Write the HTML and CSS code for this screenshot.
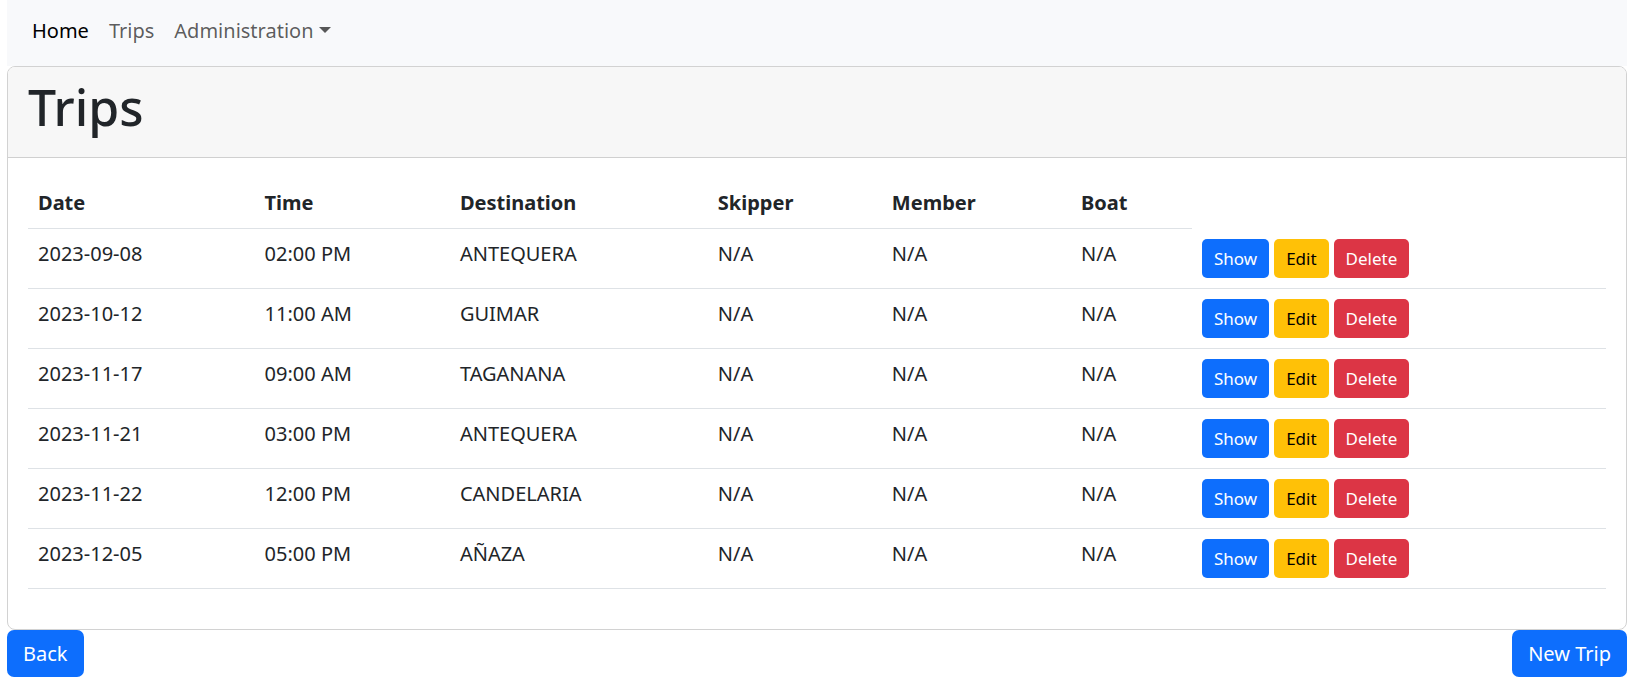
FILE: index.html
```html
<!DOCTYPE html>
<html lang="en">
<head>
<meta charset="utf-8">
<meta name="viewport" content="width=device-width, initial-scale=1">
<title>Trips</title>
<link rel="stylesheet" href="styles.css">
</head>
<body>
<nav class="navbar">
  <a class="nav-link active" href="#" aria-current="page">Home</a>
  <a class="nav-link" href="#">Trips</a>
  <button class="nav-link dropdown-toggle" type="button" aria-haspopup="true">Administration</button>
</nav>
<main>
  <section class="card">
    <header class="card-header"><h1>Trips</h1></header>
    <div class="card-body">
      <table class="table">
        <thead>
          <tr><th scope="col">Date</th><th scope="col">Time</th><th scope="col">Destination</th><th scope="col">Skipper</th><th scope="col">Member</th><th scope="col">Boat</th></tr>
        </thead>
        <tbody>
          <tr><td>2023-09-08</td><td>02:00 PM</td><td>ANTEQUERA</td><td>N/A</td><td>N/A</td><td>N/A</td><td><div class="actions"><a class="btn btn-sm btn-primary" href="#">Show</a><a class="btn btn-sm btn-warning" href="#">Edit</a><button class="btn btn-sm btn-danger" type="button">Delete</button></div></td></tr>
          <tr><td>2023-10-12</td><td>11:00 AM</td><td>GUIMAR</td><td>N/A</td><td>N/A</td><td>N/A</td><td><div class="actions"><a class="btn btn-sm btn-primary" href="#">Show</a><a class="btn btn-sm btn-warning" href="#">Edit</a><button class="btn btn-sm btn-danger" type="button">Delete</button></div></td></tr>
          <tr><td>2023-11-17</td><td>09:00 AM</td><td>TAGANANA</td><td>N/A</td><td>N/A</td><td>N/A</td><td><div class="actions"><a class="btn btn-sm btn-primary" href="#">Show</a><a class="btn btn-sm btn-warning" href="#">Edit</a><button class="btn btn-sm btn-danger" type="button">Delete</button></div></td></tr>
          <tr><td>2023-11-21</td><td>03:00 PM</td><td>ANTEQUERA</td><td>N/A</td><td>N/A</td><td>N/A</td><td><div class="actions"><a class="btn btn-sm btn-primary" href="#">Show</a><a class="btn btn-sm btn-warning" href="#">Edit</a><button class="btn btn-sm btn-danger" type="button">Delete</button></div></td></tr>
          <tr><td>2023-11-22</td><td>12:00 PM</td><td>CANDELARIA</td><td>N/A</td><td>N/A</td><td>N/A</td><td><div class="actions"><a class="btn btn-sm btn-primary" href="#">Show</a><a class="btn btn-sm btn-warning" href="#">Edit</a><button class="btn btn-sm btn-danger" type="button">Delete</button></div></td></tr>
          <tr><td>2023-12-05</td><td>05:00 PM</td><td>AÑAZA</td><td>N/A</td><td>N/A</td><td>N/A</td><td><div class="actions"><a class="btn btn-sm btn-primary" href="#">Show</a><a class="btn btn-sm btn-warning" href="#">Edit</a><button class="btn btn-sm btn-danger" type="button">Delete</button></div></td></tr>
        </tbody>
      </table>
    </div>
  </section>
  <div class="page-actions">
    <a class="btn btn-primary" href="#">Back</a>
    <a class="btn btn-primary" href="#">New Trip</a>
  </div>
</main>
</body>
</html>
```
FILE: styles.css
```css
*, *::before, *::after { box-sizing: border-box; }

body {
  margin: 0;
  padding: 0 9px 0 7px;
  background: #fff;
  color: #212529;
  font-family: "Noto Sans", "Liberation Sans", sans-serif;
  font-size: 20px;
  line-height: 30px;
}

.navbar {
  display: flex;
  align-items: center;
  padding: 6px 15px 10px;
  background: #f8f9fb;
}

.nav-link {
  padding: 10px;
  border: 0;
  background: none;
  color: rgba(0, 0, 0, 0.65);
  font: inherit;
  text-decoration: none;
  cursor: pointer;
}

.nav-link.active { color: #000; }

.dropdown-toggle::after {
  content: "";
  display: inline-block;
  margin-left: 5px;
  vertical-align: 5px;
  border-top: 6px solid;
  border-right: 6px solid transparent;
  border-left: 6px solid transparent;
}

.card {
  border: 1px solid #d2d2d2;
  border-radius: 8px;
}

.card-header {
  padding: 10px 20px;
  border-bottom: 1px solid #d0d0d0;
  border-radius: 7px 7px 0 0;
  background: #f7f7f7;
}

h1 {
  margin: 0 0 10px;
  font-size: 50px;
  font-weight: 500;
  line-height: 60px;
}

.card-body { padding: 20px; }

.table {
  width: 100%;
  margin-bottom: 20px;
  border-collapse: collapse;
}

.table th,
.table td {
  padding: 10px;
  border-bottom: 1px solid #dee2e6;
  text-align: left;
  vertical-align: top;
}

.actions {
  display: flex;
  gap: 5px;
}

.btn {
  padding: 8px 16px;
  border: 0;
  border-radius: 7px;
  font: inherit;
  line-height: 31px;
  text-decoration: none;
  cursor: pointer;
}

.btn-sm {
  padding: 6px 12px;
  border-radius: 5px;
  font-size: 17px;
  line-height: 27px;
}

.btn-primary { background: #0d6efd; color: #fff; }
.btn-warning { background: #ffc107; color: #000; }
.btn-danger { background: #dc3545; color: #fff; }

.page-actions {
  display: flex;
  justify-content: space-between;
}
```
